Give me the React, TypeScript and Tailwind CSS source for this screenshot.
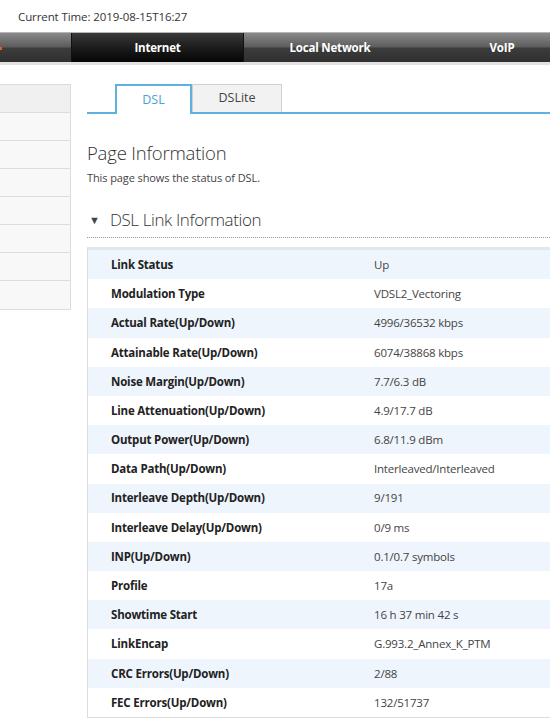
import React from "react"

const rows: [string, string][] = [
  ["Link Status", "Up"],
  ["Modulation Type", "VDSL2_Vectoring"],
  ["Actual Rate(Up/Down)", "4996/36532 kbps"],
  ["Attainable Rate(Up/Down)", "6074/38868 kbps"],
  ["Noise Margin(Up/Down)", "7.7/6.3 dB"],
  ["Line Attenuation(Up/Down)", "4.9/17.7 dB"],
  ["Output Power(Up/Down)", "6.8/11.9 dBm"],
  ["Data Path(Up/Down)", "Interleaved/Interleaved"],
  ["Interleave Depth(Up/Down)", "9/191"],
  ["Interleave Delay(Up/Down)", "0/9 ms"],
  ["INP(Up/Down)", "0.1/0.7 symbols"],
  ["Profile", "17a"],
  ["Showtime Start", "16 h 37 min 42 s"],
  ["LinkEncap", "G.993.2_Annex_K_PTM"],
  ["CRC Errors(Up/Down)", "2/88"],
  ["FEC Errors(Up/Down)", "132/51737"],
]

const grayTab =
  "bg-[linear-gradient(to_bottom,#8a8a8a_0%,#5c5c5c_48%,#3c3c3c_52%,#303030_100%)]"

export default function App() {
  return (
    <div className="w-[550px] h-[720px] overflow-hidden bg-white text-[#333] font-['Open_Sans',sans-serif]">
      <div className="h-8 pl-[18px] pt-[9px] text-[11.5px] tracking-[-0.1px] leading-[16px] text-[#333]">
        Current Time: 2019-08-15T16:27
      </div>

      {/* top nav */}
      <div className="border-t border-[#b5b5b5] border-b-[3px] border-b-[#e2e2e2]">
        <div className="flex h-[29px] text-[11.5px] tracking-[-0.2px] font-bold text-white">
          <div className={`w-[71px] shrink-0 relative ${grayTab}`}>
            <span className="absolute left-0 top-[14px] w-[2px] h-[3px] bg-[#e8591a]" />
          </div>
          <div className="w-[173px] shrink-0 flex items-center justify-center bg-[linear-gradient(to_bottom,#3a3a3a_0%,#1c1c1c_50%,#050505_100%)] border-x border-[#111]">
            Internet
          </div>
          <div className={`w-[172px] shrink-0 flex items-center justify-center ${grayTab}`}>
            Local Network
          </div>
          <div className={`w-[172px] shrink-0 flex items-center justify-center ${grayTab}`}>
            VoIP
          </div>
        </div>
      </div>

      <div className="flex pt-[19px]">
        {/* side menu */}
        <div className="w-[71px] shrink-0">
          <div className="border border-l-0 border-[#dcdcdc]">
            <div className="h-[28px] bg-[#f0f0f0] border-b border-[#dcdcdc]" />
            {[0, 1, 2, 3, 4, 5, 6].map((i) => (
              <div
                key={i}
                className={`h-[28px] bg-[#f8f8f8] ${i < 6 ? "border-b border-[#dcdcdc]" : ""}`}
              />
            ))}
          </div>
        </div>

        {/* content */}
        <div className="flex-1 ml-[16px]">
          <div className="flex items-end border-b-2 border-[#5fb0dd] h-[30px]">
            <div className="w-[28px]" />
            <div className="w-[77px] h-[30px] -mb-[2px] flex items-center justify-center border-2 border-b-0 border-[#5fb0dd] bg-white text-[12.5px] text-[#4aa3d8]">
              DSL
            </div>
            <div className="w-[90px] h-[28px] flex items-center justify-center border border-b-0 border-[#d0d0d0] bg-[#f2f2f2] text-[12.5px] text-[#444]">
              DSLite
            </div>
          </div>

          <div className="pt-[26px] text-[18.5px] leading-[26px] text-[#333] font-light tracking-[-0.2px]">
            Page Information
          </div>
          <div className="pt-[5px] text-[11px] leading-[14px] text-[#444] tracking-[-0.1px]">
            This page shows the status of DSL.
          </div>

          <div className="mt-[22px] flex items-center h-[26px] border-b border-dotted border-[#999] pb-[4px] box-content">
            <span className="ml-[2px] text-[11px] text-[#444]">▼</span>
            <span className="ml-[10px] text-[17px] text-[#333] font-light tracking-[-0.4px]">DSL Link Information</span>
          </div>

          <div className="mt-[9px] border-l border-b border-[#dcdcdc] border-t-[3px] border-t-[#e3e6ea]">
            {rows.map(([k, v], i) => (
              <div
                key={k}
                className={`flex items-center h-[29.2px] text-[11.5px] tracking-[-0.2px] ${i % 2 === 0 ? "bg-[#eef5fc]" : "bg-white"}`}
              >
                <div className="w-[286px] pl-[23px] font-bold text-[#222]">{k}</div>
                <div className="text-[#444]">{v}</div>
              </div>
            ))}
          </div>
        </div>
      </div>
    </div>
  )
}
